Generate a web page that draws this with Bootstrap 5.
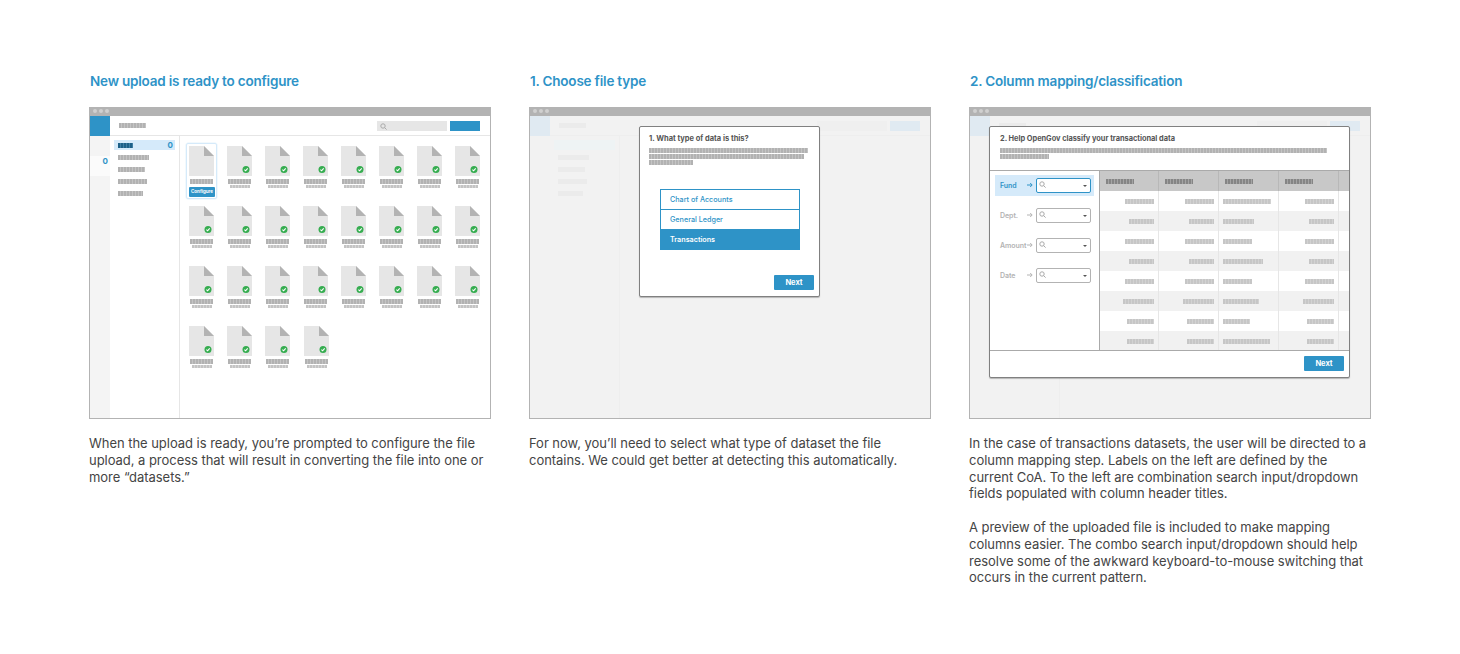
<!DOCTYPE html>
<html lang="en"><head><meta charset="utf-8"><title>Upload flow</title>
<link href="https://cdn.jsdelivr.net/npm/bootstrap@5.3.0/dist/css/bootstrap.min.css" rel="stylesheet">
<style>
:root{--blue:#2e93c7;--gr:#b3b3b3}
body{background:#fff;font-family:"Inter","Liberation Sans",sans-serif;color:#444}
.page{padding:71px 0 0 89px;gap:38px;width:1460px;height:654px;overflow:hidden}
.step{width:402px}
.step-title{font-size:13.5px;font-weight:600;color:var(--blue);line-height:20px;margin:0 0 16px 1px;letter-spacing:-.2px}
.step-text{font-size:13px;line-height:16.8px;margin:16px 0 0;letter-spacing:-.04px;color:#444}
.mock{height:312px;border:1px solid var(--gr);position:relative;background:#fff}
.mock-bar{height:9px;background:var(--gr);margin-top:-1px;padding:2px 3px;gap:2px}
.dot3{width:4px;height:4px;border-radius:50%;background:#d0d0d0}
.strip{height:20px;border-bottom:1px solid #e6e6e6;padding-right:10px}
.brand{width:20px;height:20px;background:var(--blue)}
.gb{display:block;height:5px;background:repeating-linear-gradient(90deg,#b2b2b2 0 2px,#c4c4c4 2px 3px)}
.gb-s{height:3px;background:repeating-linear-gradient(90deg,#c4c4c4 0 2px,#d6d6d6 2px 3px)}
.gb-k{background:repeating-linear-gradient(90deg,#858585 0 2px,#a4a4a4 2px 3px)}
.gb-l{background:repeating-linear-gradient(90deg,#c6c6c6 0 2px,#d2d2d2 2px 3px)}
.gb-a{background:repeating-linear-gradient(90deg,#1c6088 0 2px,#3f7ea3 2px 3px)}
.headbar{width:27px;margin-left:9px}
.searchbox{width:70px;height:10px;background:#e6e6e6;margin-right:3px;padding:2px 3px;line-height:0}
.actbtn{width:30px;height:10px;background:var(--blue)}
.rail{width:20px;background:#f4f4f4;padding-top:20px}
.railcell{height:20px;background:#fbfbfb;color:var(--blue);font-size:8px;font-weight:700;text-align:right;padding:0 2px;line-height:11px}
.side{width:70px;border-right:1px solid #e6e6e6;padding-top:4px}
.side-on{margin:0 4px 5px 4px;height:10px;background:#d5eafa;padding:0 2px 0 4px;color:var(--blue);font-size:8px;font-weight:700;line-height:10px}
.side .plainbar{margin:0 0 7px 8px}
.tilegrid{display:grid;grid-template-columns:repeat(8,25px);column-gap:13px;grid-auto-rows:60px;padding:10px 0 0 9px}
.ftile{width:25px;position:relative}
.ftile svg{display:block}
.ftile .gb{margin:3px 0 1px 1px;width:23px}
.ftile .gb-s{margin:0 0 0 3px;width:20px}
.ftile-on::after{content:"";position:absolute;left:-3px;top:-3px;width:31px;height:56px;border:1px solid #d5eafa;border-radius:2px;box-shadow:0 0 0 .5px #e6f3fc}
.ftile:nth-child(28){left:1px}
.cfg{display:block;width:26px;height:10px;margin-top:3px;background:var(--blue);color:#fff;font-size:4.5px;font-weight:700;line-height:10px;text-align:center;border-radius:1px;position:relative;z-index:1}
/* faded state */
.faded{background:#f2f2f2}
.faded>.strip{border-color:#eee}
.faded .brand{background:#e0eaf2}
.faded .rail{background:#f2f2f2}
.faded .side{border-color:#eee}
.faded .searchbox{background:#efefef}
.faded .actbtn{background:#e0eaf2}
.faded>.strip .gb,.faded .side .gb{background:#ebebeb}
.faded .side-on{background:#eef3f4}
.modalx{position:absolute;background:#fff;border:1px solid #808080;border-radius:2px;box-shadow:0 1px 1px rgba(0,0,0,.25)}
.m1{left:109px;top:18px;width:181px;height:171px;padding:6px 9px}
.m2{left:19px;top:18px;width:361px;height:252px}
.mtitle{font-size:7.5px;font-weight:700;color:#555;line-height:11px;margin-bottom:4px;letter-spacing:-.02px}
.m2 .mtitle{font-size:7.4px}
.mline{margin-bottom:1px}
.typelist{width:140px;margin:24px 0 0 11px;border:1px solid var(--blue);border-radius:2px}
.typelist .list-group-item{height:20px;padding:0 9px;line-height:20px;font-size:7.2px;font-weight:500;color:var(--blue);border-width:0 0 1px;border-color:var(--blue);background:#fff}
.typelist .list-group-item:last-child{border-bottom:0}
.typelist .list-group-item.active{background:var(--blue);color:#fff;font-weight:600;line-height:20px}
.nextb{width:40px;height:15px;background:var(--blue);color:#fff;font-size:7.5px;font-weight:700;line-height:15px;text-align:center;border-radius:1px}
.m1 .nextb{position:absolute;right:5px;bottom:6px}
.m2head{height:44px;padding:6px 10px;border-bottom:1px solid #aaa}
.m2body{height:180px;border-bottom:1px solid #aaa;overflow:hidden}
.mapcol{width:110px;flex:none;border-right:1px solid #aaa;padding:4px 5px 0}
.maprow{height:21px;margin-bottom:9px;padding-left:5px;font-size:7px;font-weight:600;color:#b3b3b3}
.maprow.on{background:#d5eafa;color:var(--blue)}
.maprow .lbl{width:27px;padding-top:2px;letter-spacing:-.05px}
.maprow>svg{margin-top:-1px}
.combo{width:55px;height:15px;margin-left:3px;border:1px solid #b3b3b3;border-radius:2px;background:#fff;padding:0 3px 0 2px;line-height:0}
.combo>svg{margin-top:-3px}
.maprow.on .combo{border-color:var(--blue)}
.mapcaret{width:0;height:0;border:2px solid transparent;border-top:2.5px solid #555;border-bottom:0}
.gridtb{width:249px;flex:none;border-collapse:separate;border-spacing:0;table-layout:fixed}
.gridtb th{height:20px;background:#c8c8c8;border-right:1px solid #b8b8b8;padding:0 4px 0 6px}
.gridtb th:last-child,.gridtb td:last-child{border-right:0}
.gridtb td{height:20px;background:#fff;border-right:1px solid #e6e6e6;padding:0 4px;vertical-align:middle}
.gridtb tr:nth-child(even) td{background:#f1f1f1}
.gridtb td:not(:nth-child(3)) .gb{margin-left:auto}
.m2foot{height:26px;padding:5px 5px 0 0}
</style></head>
<body>
<div class="page d-flex align-items-start">

<section class="step">
<h2 class="step-title">New upload is ready to configure</h2>
<div class="mock d-flex flex-column">
  <div class="mock-bar d-flex"><i class="dot3"></i><i class="dot3"></i><i class="dot3"></i></div>
  <div class="strip d-flex align-items-center"><div class="brand"></div><span class="gb headbar"></span>
    <div class="searchbox ms-auto"><svg width="7" height="7" viewBox="0 0 7 7" fill="none" stroke="#aaa"><circle cx="3" cy="3" r="2.2"/><path d="M4.6 4.6 6.6 6.6"/></svg></div><div class="actbtn"></div></div>
  <div class="d-flex flex-grow-1">
    <div class="rail"><div class="railcell">0</div></div>
    <div class="side">
      <div class="side-on d-flex align-items-center justify-content-between"><span class="gb gb-a" style="width:15px"></span><span>0</span></div>
      <span class="gb plainbar" style="width:31px"></span><span class="gb plainbar" style="width:27px"></span><span class="gb plainbar" style="width:29px"></span><span class="gb plainbar" style="width:25px"></span>
    </div>
    <div class="tilegrid flex-grow-1 align-content-start" id="tiles"></div>
  </div>
</div>
<p class="step-text">When the upload is ready, you’re prompted to configure the file<br>upload, a process that will result in converting the file into one or<br>more “datasets.”</p>
</section>

<section class="step">
<h2 class="step-title">1. Choose file type</h2>
<div class="mock faded d-flex flex-column">
  <div class="mock-bar d-flex"><i class="dot3"></i><i class="dot3"></i><i class="dot3"></i></div>
  <div class="strip d-flex align-items-center"><div class="brand"></div><span class="gb headbar"></span><div class="searchbox ms-auto"></div><div class="actbtn"></div></div>
  <div class="d-flex flex-grow-1">
    <div class="rail"></div>
    <div class="side"><div class="side-on"></div><span class="gb plainbar" style="width:31px"></span><span class="gb plainbar" style="width:27px"></span><span class="gb plainbar" style="width:29px"></span><span class="gb plainbar" style="width:25px"></span></div>
  </div>
  <div class="modalx m1">
    <div class="mtitle">1. What type of data is this?</div>
    <span class="gb mline" style="width:159px"></span><span class="gb mline" style="width:155px"></span><span class="gb mline" style="width:44px"></span>
    <div class="list-group rounded-0 typelist">
      <div class="list-group-item">Chart of Accounts</div>
      <div class="list-group-item">General Ledger</div>
      <div class="list-group-item active">Transactions</div>
    </div>
    <div class="nextb">Next</div>
  </div>
</div>
<p class="step-text">For now, you’ll need to select what type of dataset the file<br>contains. We could get better at detecting this automatically.</p>
</section>

<section class="step">
<h2 class="step-title">2. Column mapping/classification</h2>
<div class="mock faded d-flex flex-column">
  <div class="mock-bar d-flex"><i class="dot3"></i><i class="dot3"></i><i class="dot3"></i></div>
  <div class="strip d-flex align-items-center"><div class="brand"></div><span class="gb headbar"></span><div class="searchbox ms-auto"></div><div class="actbtn"></div></div>
  <div class="d-flex flex-grow-1">
    <div class="rail"></div>
    <div class="side"></div>
  </div>
  <div class="modalx m2">
    <div class="m2head">
      <div class="mtitle">2. Help OpenGov classify your transactional data</div>
      <span class="gb mline" style="width:327px"></span><span class="gb mline" style="width:49px"></span>
    </div>
    <div class="m2body d-flex">
      <div class="mapcol" id="maps"></div>
      <table class="gridtb"><thead><tr id="ghead"></tr></thead><tbody id="gbody"></tbody></table>
    </div>
    <div class="m2foot d-flex justify-content-end"><div class="nextb">Next</div></div>
  </div>
</div>
<p class="step-text">In the case of transactions datasets, the user will be directed to a<br>column mapping step. Labels on the left are defined by the<br>current CoA. To the left are combination search input/dropdown<br>fields populated with column header titles.<br><br>A preview of the uploaded file is included to make mapping<br>columns easier. The combo search input/dropdown should help<br>resolve some of the awkward keyboard-to-mouse switching that<br>occurs in the current pattern.</p>
</section>
</div>

<script>
var tile=function(on){return '<div class="ftile'+(on?' ftile-on':'')+'"><svg width="25" height="30" viewBox="0 0 25 30"><path d="M0 0H15L25 10V30H0Z" fill="#e6e6e6"/><path d="M15 0 25 10H15Z" fill="#b3b3b3"/>'+(on?'':'<circle cx="19" cy="23.5" r="3.5" fill="#36ad50"/><path d="M17.4 23.7 18.6 24.8 20.7 22.3" fill="none" stroke="#fff" stroke-width="1.1"/>')+'</svg><span class="gb"></span>'+(on?'<span class="cfg">Configure</span>':'<span class="gb gb-s"></span>')+'</div>'};
var t='';for(var i=0;i<28;i++)t+=tile(i===0);document.getElementById('tiles').innerHTML=t;
var m='';['Fund','Dept.','Amount','Date'].forEach(function(l,i){m+='<div class="maprow d-flex align-items-center'+(i===0?' on':'')+'"><span class="lbl">'+l+'</span><svg width="6" height="6" viewBox="0 0 6 6" fill="none" stroke="'+(i===0?'#2e93c7':'#b3b3b3')+'"><path d="M0 3H5M3.2 1 5.2 3 3.2 5"/></svg><div class="combo d-flex align-items-center justify-content-between"><svg width="7" height="7" viewBox="0 0 7 7" fill="none" stroke="#aaa"><circle cx="3" cy="3" r="2.2"/><path d="M4.6 4.6 6.6 6.6"/></svg><i class="mapcaret"></i></div></div>'});document.getElementById('maps').innerHTML=m;
var h='';[0,1,2,3,4].forEach(function(i){h+='<th style="width:'+[59,60,60,60,10][i]+'px">'+(i<4?'<span class="gb gb-k" style="width:28px"></span>':'')+'</th>'});document.getElementById('ghead').innerHTML=h;
var rows=[[29,29,48,29],[25,25,31,25],[29,29,29,29],[25,25,40,25],[29,29,29,29],[31,31,36,31],[27,27,27,27],[27,27,47,27]];
var b='';rows.forEach(function(r){b+='<tr>';r.forEach(function(w){b+='<td><span class="gb gb-l" style="width:'+w+'px"></span></td>'});b+='<td></td></tr>'});document.getElementById('gbody').innerHTML=b;
</script>
<script src="https://cdn.jsdelivr.net/npm/bootstrap@5.3.0/dist/js/bootstrap.bundle.min.js"></script>
</body></html>
